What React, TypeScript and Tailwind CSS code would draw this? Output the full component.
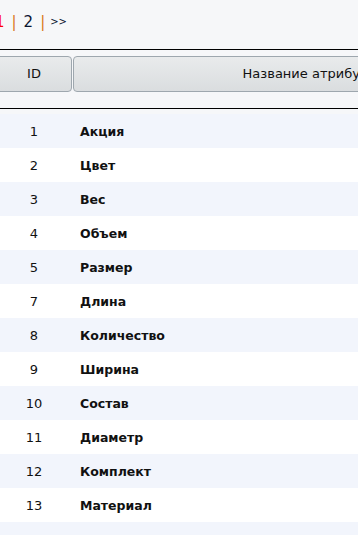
const rows: [number, string][] = [
  [1, 'Акция'],
  [2, 'Цвет'],
  [3, 'Вес'],
  [4, 'Объем'],
  [5, 'Размер'],
  [7, 'Длина'],
  [8, 'Количество'],
  [9, 'Ширина'],
  [10, 'Состав'],
  [11, 'Диаметр'],
  [12, 'Комплект'],
  [13, 'Материал'],
  [14, 'Производитель'],
]

export default function App() {
  return (
    <div
      className="w-[358px] h-[535px] overflow-hidden bg-[#f6f7f9] text-[#111]"
      style={{ fontFamily: 'Tahoma, "DejaVu Sans", sans-serif' }}
    >
      {/* Pagination */}
      <div className="-ml-[5px] h-[49px] pb-[5px] flex items-center gap-[7px] text-[15px] leading-[16px]">
        <span className="text-[#ff0000]">1</span>
        <span className="text-[#d9781a]">|</span>
        <span className="text-[#0a1530]">2</span>
        <span className="text-[#d9781a]">|</span>
        <span className="-ml-[2px] text-[#0a1530] text-[10px]">&gt;&gt;</span>
      </div>

      <div className="border-t border-black" />

      {/* Header */}
      <div className="-ml-[4px] mt-[6px] flex gap-[1px] w-[700px]">
        <div className="w-[76px] h-[36px] flex items-center justify-center rounded-[4px] border border-[#9ea7ae] bg-gradient-to-b from-[#e9ebec] to-[#dadddf] text-[13px]">
          ID
        </div>
        <div className="w-[472px] h-[36px] flex items-center justify-center rounded-[4px] border border-[#9ea7ae] bg-gradient-to-b from-[#e9ebec] to-[#dadddf] text-[13px]">
          Название атрибута
        </div>
      </div>

      <div className="mt-[16px] border-t border-black" />

      {/* Rows */}
      <div className="mt-[5px] flex flex-col">
        {rows.map(([id, name], i) => (
          <div
            key={id}
            className={`h-[34px] pt-[2px] flex items-center ${i % 2 === 0 ? 'bg-[#f2f5fc]' : 'bg-white'}`}
          >
            <div className="-ml-[4px] w-[76px] text-center text-[13px]">{id}</div>
            <div className="pl-[8px] font-bold text-[12.5px]">{name}</div>
          </div>
        ))}
      </div>
    </div>
  )
}
